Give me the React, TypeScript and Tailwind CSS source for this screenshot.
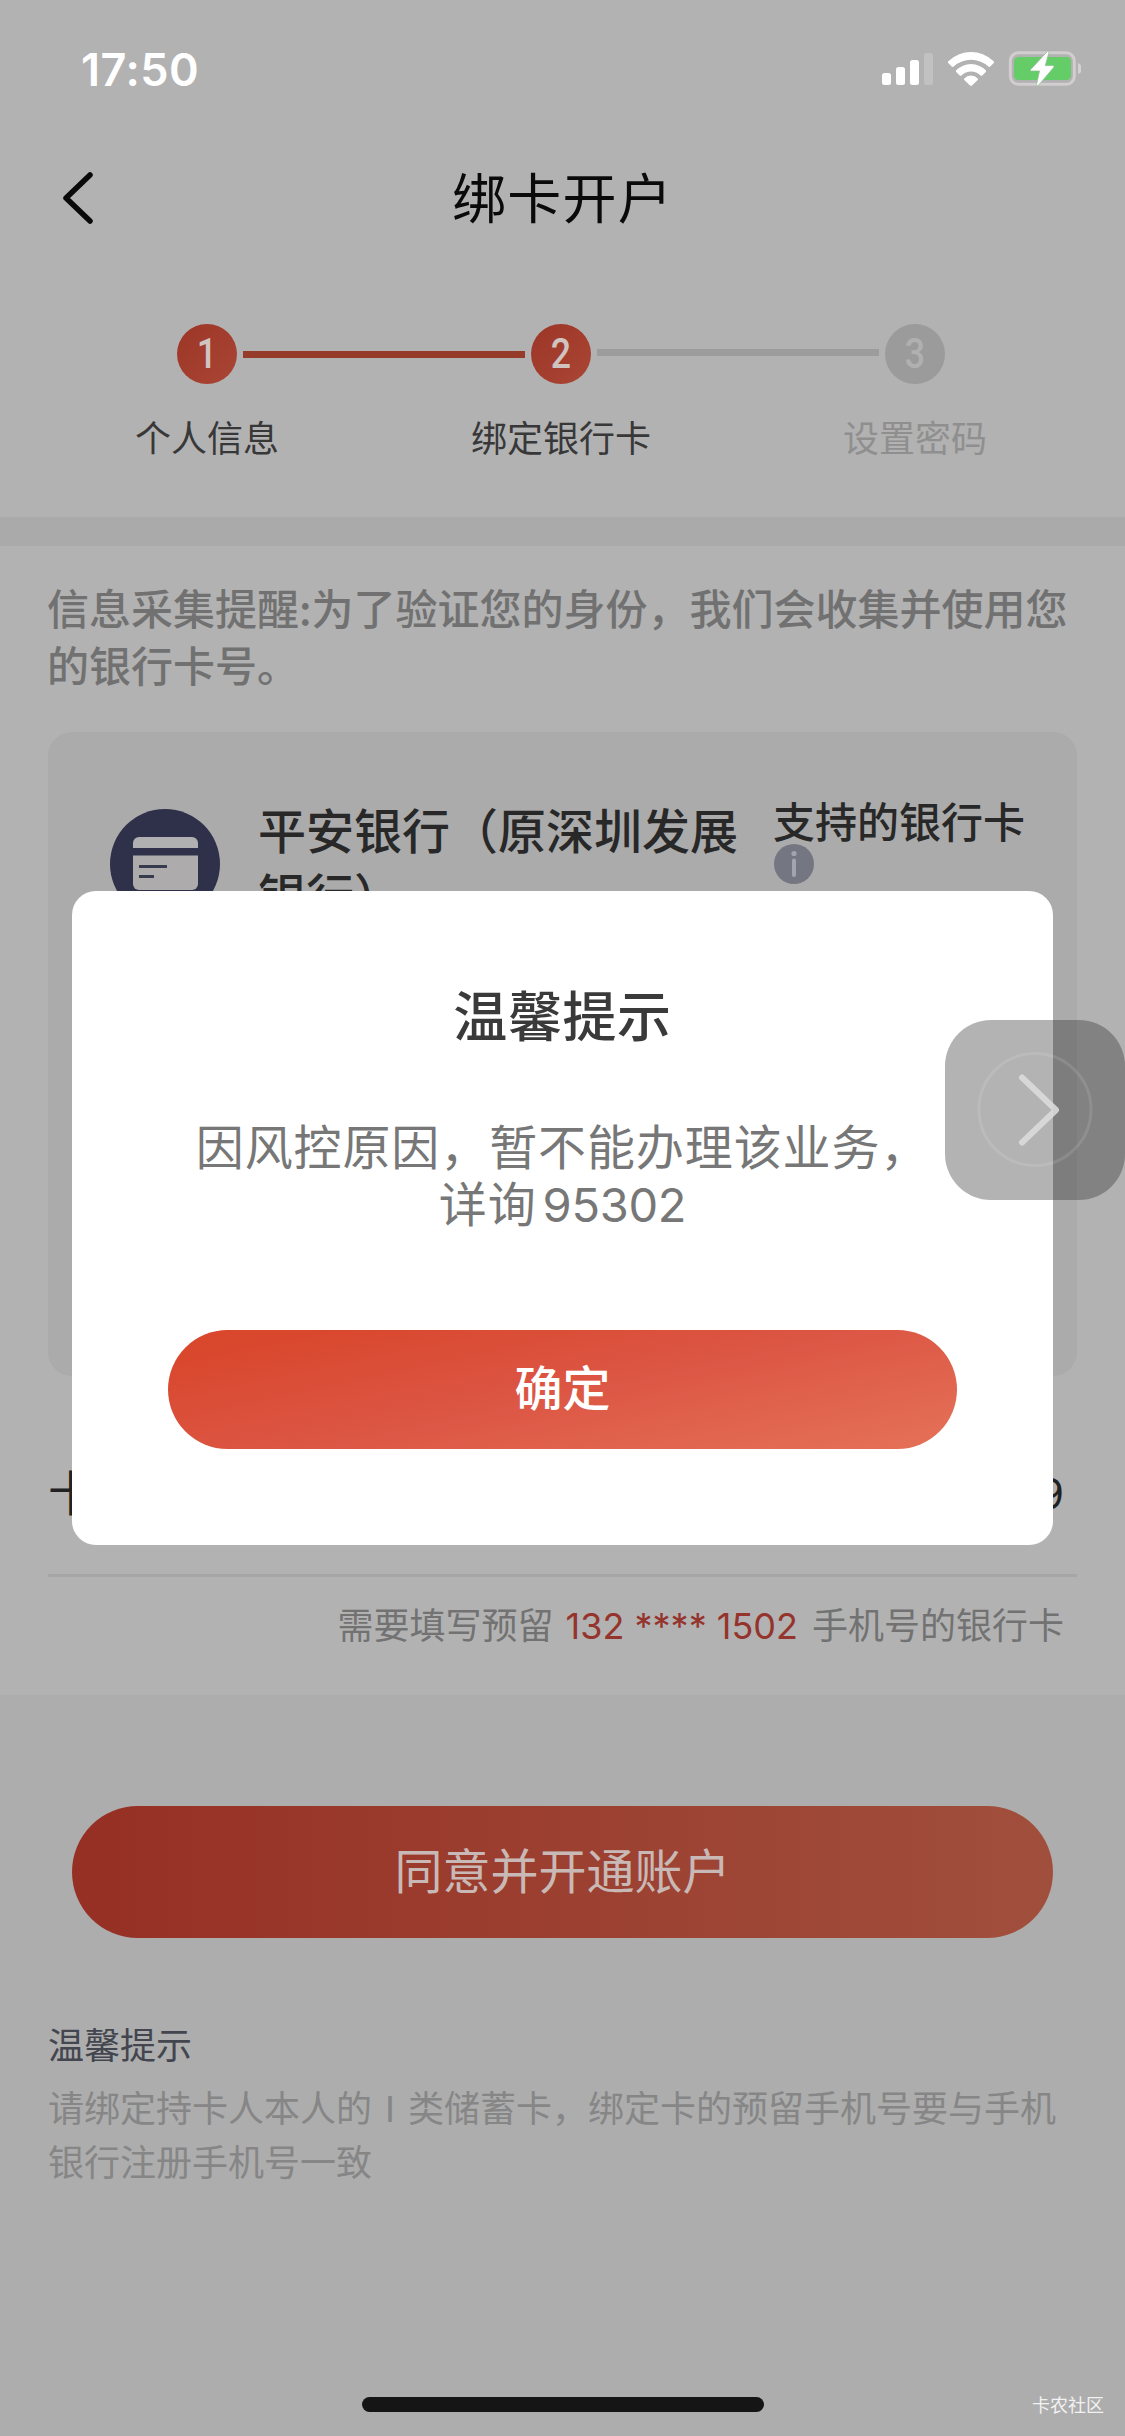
import clsx from "clsx";

interface Step {
  no: number;
  label: string;
  active: boolean;
}

const steps: Step[] = [
  { no: 1, label: "个人信息", active: true },
  { no: 2, label: "绑定银行卡", active: true },
  { no: 3, label: "设置密码", active: false },
];

function StatusBar() {
  return (
    <div className="flex h-[138px] items-center justify-between pl-[81px] pr-[44px]">
      <span className="font-['Inter'] text-[45px] leading-none font-semibold tracking-[0.5px] text-white">17:50</span>
      <svg width="200" height="40" viewBox="0 0 200 40" fill="none">
        {/* 信号 */}
        <rect x="1" y="24" width="9" height="12" rx="2.5" fill="#fff" />
        <rect x="15" y="18" width="9" height="18" rx="2.5" fill="#fff" />
        <rect x="29" y="11" width="9" height="25" rx="2.5" fill="#fff" />
        <rect x="43" y="4" width="9" height="32" rx="2.5" fill="#c1c1c1" />
        {/* wifi */}
        <path d="M67 13.8Q66.6 12.8 67.6 12Q77.5 3 90 3Q102.5 3 112.4 12Q113.4 12.8 113 13.8L109.3 17.6Q108.3 18.3 107.3 17.5Q99.6 10.8 90 10.8Q80.4 10.8 72.7 17.5Q71.700 18.3 70.7 17.6Z" fill="#fff" />
        <path d="M75 21.6Q81.5 15 90 15Q98.5 15 105 21.6Q105.3 22.3 104.8 23L101 26.7Q100.3 27 99.5 26.4Q95.5 22.6 90 22.6Q84.5 22.6 80.5 26.4Q79.7 27 79 26.7L75.2 23Q74.7 22.3 75 21.6Z" fill="#fff" />
        <path d="M83 29.8Q86 26.6 90 26.6Q94 26.6 97 29.8Q97.2 30.4 96.7 31L91 36.4Q90 37.2 89 36.4L83.3 31Q82.8 30.4 83 29.8Z" fill="#fff" />
        {/* 电池 */}
        <rect x="129.3" y="3.8" width="64" height="31.5" rx="8" stroke="#d2cdd0" strokeWidth="3" />
        <rect x="133" y="8" width="57" height="23" rx="4.5" fill="#65cd68" />
        <path d="M197 14q4 1.500 4 5.500t-4 5.500z" fill="#d2d2d2" />
        <path d="M166.5 2.3L149.5 20.7Q149 22 150.5 22H158.5L155.5 35.5Q156 37.5 157.8 36L173 18Q173.5 16.7 172 16.6H164.3L168 3.3Q167.700 1.7 166.5 2.3Z" fill="#fff" stroke="#8fbf90" strokeWidth="0.8" />
      </svg>
    </div>
  );
}

function StepBar() {
  return (
    <div className="h-[307px] pt-[114px]">
      <div className="flex items-center gap-1.5 pr-[180px] pl-[177px]">
        {steps.map((s, i) => (
          <div key={s.no} className="contents">
            {i > 0 && <div className={clsx("h-[7px] flex-1", s.active ? "bg-[#963c2b]" : "mb-[3px] bg-[#9c9c9c]")} />}
            <div
              className={clsx(
                "flex size-[60px] items-center justify-center rounded-full",
                s.active ? "bg-linear-to-br from-[#9c3526] to-[#aa4635] text-[#d0c4c0]" : "bg-[#9b9b9b] text-[#b0b0b0]"
              )}
            >
              <span className="scale-x-85 font-['Roboto'] text-[42px] leading-none font-medium">{s.no}</span>
            </div>
          </div>
        ))}
      </div>
      <div className="mt-[25px] flex justify-between pr-[110px] pl-[107px]">
        {steps.map(s => (
          <span
            key={s.no}
            className={clsx("w-[200px] text-center text-[36px] leading-[54px]", s.active ? "text-[#383838]" : "text-[#8f8f8f]")}
          >
            {s.label}
          </span>
        ))}
      </div>
    </div>
  );
}

function BankCard() {
  return (
    <div className="flex h-[644px] items-start rounded-3xl bg-[#ababab] pl-[62px]">
      <svg className="mt-[77px] shrink-0" width="110" height="110" viewBox="0 0 110 110">
        <circle cx="55" cy="55" r="55" fill="#2f3049" />
        <path d="M23 39V34a6 6 0 0 1 6-6H82a6 6 0 0 1 6 6V39Z" fill="#b0b0b2" />
        <path d="M23 46.5H88V75a6 6 0 0 1-6 6H29a6 6 0 0 1-6-6Z" fill="#adabac" />
        <path d="M29 57.5H57M29 67.5H44" stroke="#383a4d" strokeWidth="3" />
      </svg>
      <p className="mt-[64px] ml-[38px] w-[485px] text-[48px] leading-[65px] font-medium text-[#282828]">
        平安银行（原深圳发展银行）
      </p>
      <div className="mt-[61px] ml-[30px]">
        <p className="text-[42px] leading-[54px] font-medium text-[#282828]">支持的银行卡</p>
        <svg className="-mt-1" width="42" height="42" viewBox="0 0 42 42">
          <circle cx="21" cy="21" r="20" fill="#747681" />
          <circle cx="21" cy="10.5" r="2.6" fill="#a3a5ae" />
          <path d="M21 17.5V32" stroke="#a3a5ae" strokeWidth="4" strokeLinecap="round" />
        </svg>
      </div>
    </div>
  );
}

function Dialog() {
  return (
    <div className="absolute top-[891px] left-[72px] flex h-[654px] w-[981px] flex-col items-center rounded-3xl bg-white">
      <h2 className="mt-[83px] text-[54px] leading-[80px] font-medium tracking-[0.6px] text-[#3a3a3a]">温馨提示</h2>
      <p className="mt-[62px] text-center text-[48px] leading-[57px] tracking-[0.9px] whitespace-nowrap text-[#777777]">
        因风控原因，暂不能办理该业务，
        <br />
        详询<span className="ml-1.5 font-['Inter'] text-[47px] tracking-[-0.3px]">95302</span>
      </p>
      <button className="mt-[97px] h-[119px] w-[789px] rounded-full bg-[linear-gradient(168deg,#d9472d_10%,#dc5644_50%,#e46f57_95%)] pb-[10px] text-[48px] font-medium text-white">
        确定
      </button>
    </div>
  );
}

// 悬浮球
function FloatingBall() {
  return (
    <div className="absolute top-[1020px] right-0 size-[180px] rounded-[46px] bg-[rgba(46,46,46,0.364)]">
      <svg width="180" height="180" viewBox="0 0 180 180" fill="none">
        <circle cx="90" cy="89.5" r="56" stroke="#fff" strokeOpacity="0.11" strokeWidth="3" />
        <path d="M77 57.5L111 90L77 122.500" stroke="#dadada" strokeOpacity="0.9" strokeWidth="6" strokeLinecap="round" strokeLinejoin="round" />
      </svg>
    </div>
  );
}

export default function App() {
  return (
    <div className="relative h-[2436px] w-[1125px] overflow-hidden bg-[#adadad] font-['Noto_Sans_CJK_SC',sans-serif]">
      <div className="h-[1695px] bg-[#b2b2b2]">
        <StatusBar />

        <div className="grid h-[72px] grid-cols-[1fr_auto_1fr] items-start">
          <svg className="mt-[32px] ml-[59px]" width="38" height="56" viewBox="0 0 38 56" fill="none">
            <path d="M31 5L7 28L31 51" stroke="#0a0a0a" strokeWidth="5.5" strokeLinecap="round" strokeLinejoin="round" />
          </svg>
          <h1 className="mt-[18px] text-[54px] leading-[80px] tracking-[1.3px] text-[#0a0a0a]">绑卡开户</h1>
          <span />
        </div>

        <StepBar />

        <div className="h-[29px] bg-[#aaaaaa]" />

        <div className="px-12">
          <p className="-ml-px pt-[32px] pb-[40px] text-[42px] leading-[57px] font-medium whitespace-nowrap text-[#717171]">
            信息采集提醒:为了验证您的身份，我们会收集并使用您
            <br />
            的银行卡号。
          </p>

          <BankCard />

          <div className="flex h-[201px] items-center justify-between border-b-3 border-[#a6a6a6] pt-[30px] pr-[13px] text-[48px] text-[#222222]">
            <span>卡号</span>
            <span className="pt-[6px] font-['Inter'] text-[42px]">**** 9</span>
          </div>

          <p className="pt-[19px] pr-[13px] text-right text-[36px] leading-[54px] text-[#727272]">
            需要填写预留
            <span className="mr-[14px] ml-[12px] font-['Inter'] text-[#95342d]">132 **** 1502</span>
            手机号的银行卡
          </p>
        </div>
      </div>

      <div className="px-12 pt-[111px]">
        <div className="px-6">
          <button className="h-[132px] w-full rounded-full bg-linear-to-r from-[#962f24] to-[#a14f3d] pb-[9px] text-[48px] text-[#c9b9b6]">
            同意并开通账户
          </button>
        </div>
        <p className="mt-[78px] text-[36px] leading-[54px] text-[#43464f]">温馨提示</p>
        <p className="mt-[9px] text-[36px] leading-[54px] whitespace-nowrap text-[#868686]">
          请绑定持卡人本人的Ⅰ类储蓄卡，绑定卡的预留手机号要与手机
          <br />
          银行注册手机号一致
        </p>
      </div>

      {/* 底部横条 + 水印 */}
      <div className="absolute bottom-6 left-[362px] h-[15px] w-[402px] rounded-full bg-[#151515]" />
      <span className="absolute right-[21px] bottom-[18px] text-[18px] leading-[27px] text-[#f2f2f2]">卡农社区</span>

      <Dialog />
      <FloatingBall />
    </div>
  );
}
